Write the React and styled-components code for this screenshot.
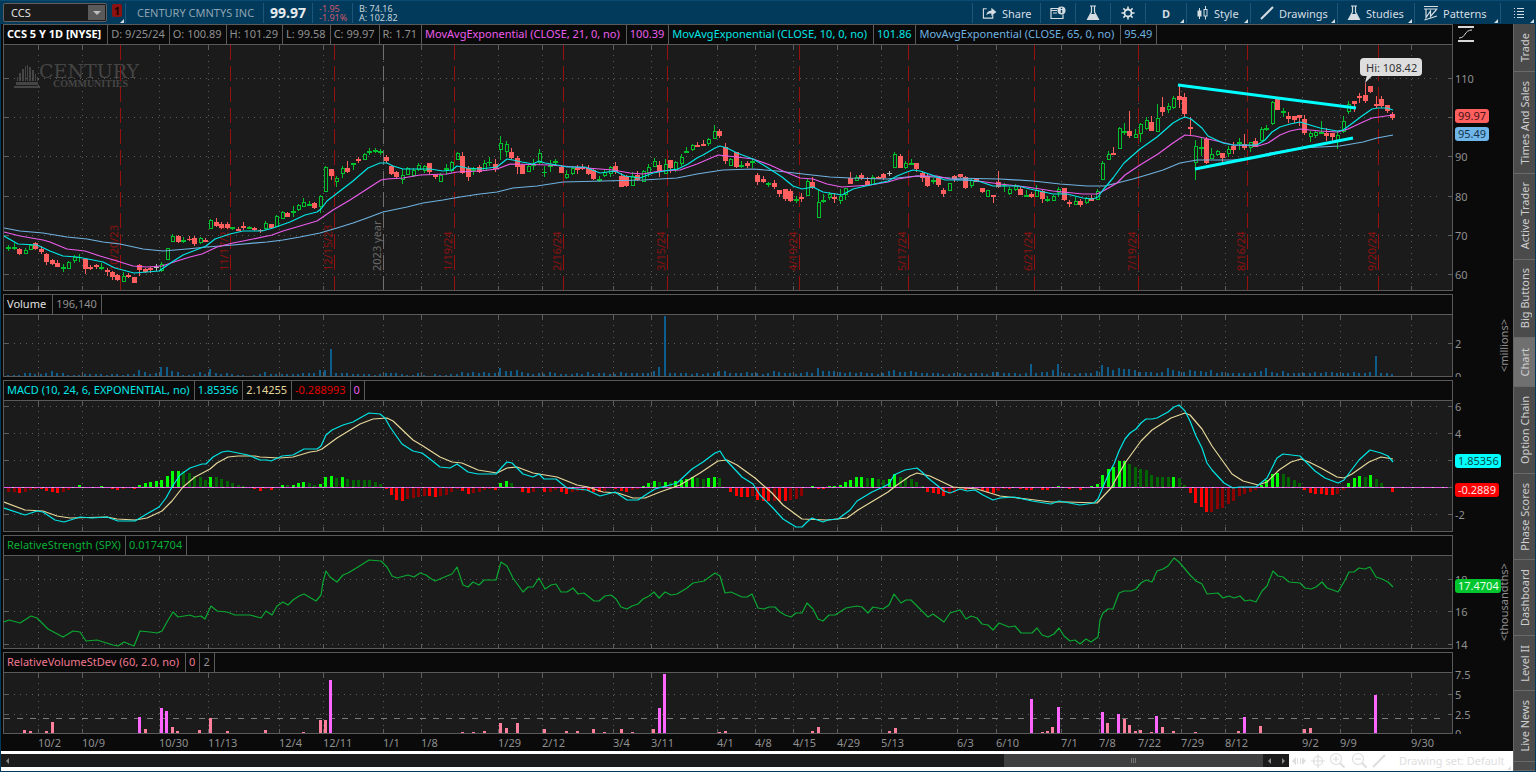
import React from 'react';
import styled, { createGlobalStyle, css } from 'styled-components';

const GlobalStyle = createGlobalStyle`
  * {
    box-sizing: border-box;
  }

  body {
    margin: 0;
    background: #0a0a0a;
    font-family: "Noto Sans", "Open Sans", sans-serif;
    font-size: 11px;
    color: #8f8f8f;
  }

  button,
  input {
    font: inherit;
    color: inherit;
    border: 0;
    padding: 0;
    background: none;
  }
`;

const colors = {
  blue: '#013a5b',
  line: '#5a5a5a',
  dot: '#5c5c5c',
  plot: '#1b1b1b',
  dark: '#0a0a0a',
  green: '#00c02e',
  red: '#ff5f5f',
  cyan: '#00e5e5',
  magenta: '#ea5cea',
  lightBlue: '#6fb2e0',
  yellow: '#e6d79a',
  expiry: '#96100f'
};

/* ---------- data ---------- */

const FIRST_BAR = 8.6;
const BAR_STEP = 5.47;
const barX = i => Math.floor(FIRST_BAR + BAR_STEP * i);

// direction, high, body top, body bottom, low
const candles = `
g 245 247 249 251|g 243 247 249 250|r 248 249 254 255|g 248 250 253 253|g 244 245 249 250|r 242 243 249 250
r 246 249 252 254|r 253 254 262 265|r 259 260 264 265|r 260 263 267 267|g 264 267 269 272|g 261 262 268 269
g 255 257 260 263|g 254 257 258 262|r 259 259 269 274|r 265 267 269 270|r 264 265 267 269|g 263 267 269 270
r 268 270 272 276|r 271 272 277 280|r 274 275 280 281|g 272 276 281 281|r 273 275 277 278|r 277 277 283 283
r 264 265 270 276|r 268 269 272 273|r 267 268 270 273|w 264 267 268 271|g 262 264 270 272|g 248 248 259 259
g 234 236 241 241|r 235 236 242 243|g 237 240 242 243|r 236 239 240 241|r 236 238 244 246|g 237 238 242 244
r 238 240 242 242|g 219 220 228 229|r 218 222 226 227|r 222 224 228 229|r 222 224 228 229|g 227 227 229 230
r 227 229 231 231|r 222 226 228 230|g 226 227 229 229|r 227 228 230 231|r 229 230 231 233|g 221 223 228 230
r 224 224 228 229|g 215 216 226 227|g 211 212 218 219|r 212 213 217 217|g 206 211 213 217|g 204 205 209 211
g 198 202 206 207|g 201 204 206 206|r 202 203 208 209|g 195 196 206 213|g 166 167 191 192|r 169 169 176 180
g 176 178 181 187|g 166 168 173 178|r 161 168 172 173|g 163 163 165 170|r 157 159 161 163|g 153 154 159 160
g 148 151 153 155|g 148 150 152 153|g 149 151 153 155|r 155 157 161 163|r 166 166 174 175|r 171 172 177 178
g 169 175 179 184|g 167 168 174 175|g 168 170 175 177|g 163 165 169 171|g 165 166 170 173|r 163 163 172 174
r 175 175 177 179|g 173 175 181 182|g 164 168 170 175|g 161 162 170 173|g 152 153 159 160|r 152 156 173 174
r 166 168 177 181|g 167 169 171 175|r 165 167 172 173|g 160 163 170 171|g 157 162 163 166|r 159 164 169 172
g 136 143 149 160|g 141 144 151 157|r 148 152 158 159|r 156 158 167 174|r 164 165 174 174|g 165 166 171 172
g 159 164 166 170|g 149 153 162 164|g 166 172 173 177|g 160 165 167 172|g 159 161 163 166|r 165 167 173 173
g 170 174 177 179|g 166 168 173 175|r 165 167 170 174|r 164 167 169 170|r 165 168 174 175|r 169 170 179 180
g 176 179 181 182|g 170 172 175 177|g 166 167 173 177|r 162 166 172 174|r 173 176 187 187|r 175 176 186 187
g 172 176 185 186|r 171 175 180 181|g 170 171 181 182|g 164 167 172 177|g 158 161 166 167|r 161 165 172 177
g 159 164 173 174|r 160 160 168 173|g 161 162 169 172|g 154 157 163 166|g 147 151 153 153|g 144 145 149 151
r 142 145 147 147|r 140 144 146 146|g 138 139 143 146|g 125 131 138 138|r 129 131 136 138|r 143 147 161 164
g 158 159 165 165|r 152 152 167 168|g 161 165 167 168|r 161 163 166 168|g 159 161 163 168|r 173 175 182 185
r 176 179 182 183|g 182 183 185 187|r 180 183 187 189|r 190 190 194 197|r 189 189 199 201|r 189 191 201 202
g 196 199 201 203|r 193 197 199 202|g 178 181 195 195|r 177 182 188 189|g 190 202 217 217|g 194 200 202 203
g 192 194 197 200|r 193 197 199 203|g 189 196 200 204|g 188 188 194 200|r 172 178 184 184|g 175 177 180 181
r 173 175 178 180|r 177 181 185 185|g 175 177 184 185|r 176 177 179 179|r 173 174 178 180|w 171 173 174 176
g 152 154 167 167|r 154 156 168 168|g 161 163 167 169|g 159 163 165 165|r 163 163 169 172|r 171 173 178 182
r 174 176 186 187|g 178 180 182 184|r 177 178 185 187|r 188 190 194 197|g 183 183 190 190|r 175 176 179 182
r 174 174 177 178|r 176 177 188 189|g 179 180 185 188|r 179 179 182 182|r 188 188 192 193|g 190 190 196 197
r 195 195 197 203|r 171 182 187 188|g 183 185 186 192|g 187 189 193 195|g 184 186 189 191|r 187 189 195 195
g 190 195 197 197|r 192 194 197 198|g 185 190 196 196|r 190 191 199 203|g 196 199 201 202|g 195 196 200 201
g 187 189 192 197|r 188 188 200 201|r 200 202 204 207|g 197 201 204 205|r 199 201 205 207|g 197 198 202 204
r 195 198 201 201|g 189 191 199 199|g 161 163 179 180|g 151 154 159 159|r 147 153 155 155|g 127 128 148 148
g 123 131 133 135|r 111 131 136 138|g 129 134 137 138|g 123 124 133 142|g 117 120 128 130|r 116 122 131 131
g 104 118 131 132|r 97 107 112 116|g 103 106 109 113|g 96 98 107 109|r 85 96 100 108|r 93 97 114 117
r 117 127 129 135|g 140 146 162 180|g 138 147 149 156|r 137 139 163 164|g 148 154 158 159|g 150 151 154 156
r 153 153 158 162|g 146 149 153 157|r 142 146 150 154|g 138 142 144 150|r 134 144 148 150|g 142 142 147 152
r 138 141 147 147|g 127 129 140 140|g 125 128 130 131|g 101 102 123 125|r 98 99 110 110|g 108 111 113 117
r 112 116 119 123|r 116 116 120 123|r 115 115 118 126|r 115 119 133 135|g 131 133 136 142|g 130 132 135 138
g 121 132 134 134|r 128 133 136 141|r 133 133 137 142|g 131 135 140 149|g 116 121 131 133|g 101 104 111 114
r 101 101 104 112|r 93 96 98 103|r 83 95 101 103|r 86 86 92 93|r 96 104 106 108|r 96 99 106 108
r 105 105 111 113|r 112 114 118 120`
  .trim()
  .split(/[|\n]/)
  .map(row => {
    const [dir, ...values] = row.split(' ');
    const [high, top, bottom, low] = values.map(Number);
    return { dir, high, top, bottom, low };
  });

const ema10 = `4,236 18,244 37,245 50,251 63,256 77,257 88,259 103,262 115,268 134,273 147,272 159,271 172,262 183,255
206,246 215,239 230,234 243,231 262,231 273,228 290,222 305,215 317,212 321,209 327,201 340,191 353,181 368,168 380,163
387,163 393,166 403,169 430,169 443,171 452,170 457,166 467,168 480,169 497,167 507,159 513,160 522,162 533,164 539,161
545,163 557,165 567,167 585,167 600,173 615,171 625,176 640,178 653,173 670,170 678,169 688,164 697,158 703,155 715,148
720,146 727,148 737,153 753,159 765,166 782,177 793,186 802,189 813,187 823,192 842,195 853,189 870,185 888,181 897,176
907,172 913,170 920,171 932,175 945,180 970,180 978,181 993,186 1018,186 1030,189 1053,194 1067,194 1083,198 1093,199
1098,197 1103,190 1113,178 1124,163 1140,149 1157,137 1173,123 1180,119 1185,117 1191,119 1202,128 1208,136 1223,143
1233,145 1257,145 1265,140 1272,132 1280,127 1290,124 1300,122 1310,125 1320,128 1337,131 1343,130 1350,125 1362,116
1372,109 1378,108 1387,108 1393,110`;

const ema21 = `4,232 20,236 43,240 50,242 67,249 85,251 100,256 117,261 133,266 147,267 162,266 177,261 190,257 202,254
217,247 233,243 253,239 272,235 283,231 300,226 317,221 333,210 350,200 367,189 381,180 387,179 403,178 420,175 447,174
457,172 480,171 497,169 510,164 550,165 587,168 613,170 630,173 643,174 660,171 680,170 697,164 718,155 737,157 753,159
770,165 783,171 800,178 813,179 827,184 842,187 870,185 888,182 898,179 917,176 937,176 950,179 978,181 1000,184
1027,187 1053,191 1083,194 1097,194 1105,190 1117,183 1125,175 1140,165 1158,154 1173,143 1185,135 1195,136 1217,141
1233,145 1258,146 1268,143 1280,135 1290,131 1300,129 1320,131 1338,132 1348,129 1363,122 1372,118 1393,115`;

const ema65 = `4,228 20,231 43,233 67,237 87,239 103,242 120,244 143,249 163,251 187,249 207,247 233,245 267,242 283,240
300,237 320,233 337,228 353,223 367,218 383,212 407,207 423,203 443,200 460,197 480,194 497,192 513,188 537,186 563,182
603,181 643,180 677,178 697,174 723,170 753,169 777,171 803,174 830,177 850,178 887,179 917,176 950,178 1000,179
1033,181 1060,184 1087,186 1105,186 1117,183 1133,179 1150,174 1163,170 1180,163 1197,160 1233,160 1257,157 1270,153
1300,148 1320,147 1340,146 1363,142 1377,138 1393,135`;

const macdLine = `4,508 25,515 37,511 43,512 55,520 64,522 80,517 92,518 107,517 118,521 135,521 145,515 159,507 166,498
172,487 180,475 190,468 202,464 206,464 213,457 222,452 228,451 248,455 260,460 267,460 271,461 282,456 293,455 304,449
317,449 321,446 326,435 332,430 343,425 353,422 360,418 369,413 380,414 385,418 390,427 402,444 413,451 422,453 430,459
440,467 450,468 457,464 468,472 478,474 496,474 502,467 507,462 512,463 523,474 533,477 539,474 544,479 556,479 567,488
587,490 600,496 615,492 627,500 638,500 647,494 655,489 677,483 692,469 703,462 715,453 720,451 725,459 742,477 753,484
760,495 773,508 783,519 796,527 802,527 807,522 812,518 823,522 828,520 838,519 850,510 857,501 872,492 883,487 889,484
894,475 905,470 917,468 922,472 928,478 938,486 944,491 950,493 960,489 967,491 975,490 983,495 993,500 1000,498
1014,497 1032,501 1051,504 1059,501 1080,505 1094,503 1098,499 1103,487 1109,473 1114,464 1119,451 1125,439 1130,433
1136,429 1141,423 1146,419 1152,419 1157,418 1168,412 1174,407 1179,405 1185,411 1190,421 1196,436 1202,448 1207,463
1212,470 1224,483 1233,488 1239,487 1256,487 1267,478 1277,458 1283,454 1300,456 1315,471 1325,478 1338,483 1344,480
1359,460 1370,450 1381,453 1388,456 1393,462`;

const signalLine = `4,502 25,510 43,511 57,516 70,518 107,517 117,519 135,520 147,518 162,511 172,501 183,487 195,477
210,469 217,463 228,457 238,456 255,456 260,457 280,458 293,457 310,452 317,451 322,449 337,438 360,424 373,419 387,418
393,421 413,440 423,446 440,457 452,462 462,463 478,470 497,473 507,468 517,467 533,473 557,477 577,485 588,487 603,492
618,493 633,498 645,498 660,492 680,485 700,473 718,461 727,460 737,465 755,478 772,493 783,505 802,519 827,520 847,518
858,510 888,492 897,485 910,476 917,473 930,476 953,487 977,489 1000,496 1027,499 1051,502 1068,502 1097,503 1111,488
1125,463 1141,441 1152,430 1171,418 1185,413 1190,415 1202,429 1212,446 1232,474 1243,481 1258,485 1267,482 1279,470
1291,462 1301,459 1309,462 1321,468 1337,477 1344,478 1352,474 1369,462 1381,457 1393,459`;

const histogram = [
  -4.3, -4.2, -4.6, -3.6, -1.6, -0.5, -1, -2.6, -3.6, -4.5, -3.6, -1.6, 0, 2.3, 0, 0, 0, 1.3, 0, -0.5, -1.6, -0.5, 0,
  -0.6, 2.3, 4.3, 5.3, 6, 7.3, 11.3, 16.3, 16.3, 15.6, 14.3, 11.3, 9.6, 7.3, 10.3, 10, 8.3, 6.3, 4.3, 2.3, 1.3, 0, -0.5,
  -2.6, -1.3, -1.6, 0, 2.3, 2, 2.3, 4.3, 5.3, 4.3, 2.3, 3.3, 10.3, 11.3, 9.3, 10.3, 8.3, 7.3, 7.2, 7.1, 7, 5.3, 3.3,
  -0.6, -6.6, -11.6, -12.6, -11.3, -10.3, -8.6, -7.6, -7.8, -8.6, -8.3, -6.6, -3.6, -0.5, -2.6, -5.6, -4.6, -4.4, -1.6,
  -0.6, -1.6, 4.3, 6.3, 4.3, 0, -3.6, -4.6, -3.6, -0.3, -3.6, -3.5, -1.5, -3.6, -5.6, -3.5, -3, -2.6, -3, -3.5, -4, -3,
  0, -0.5, -2.6, -3.6, -2.3, -1.3, 1.3, 4.3, 6.3, 5.3, 5.4, 5.3, 5.6, 6.6, 8.3, 9.6, 9.3, 8.3, 9.3, 10.3, 9.3, 0, -3.6,
  -7.6, -8.6, -8.6, -7.6, -11.6, -12.6, -12.8, -12.6, -12.7, -12.8, -12.3, -10.6, -7.6, 0, 1.3, -0.5, -1, 1.3, 1.3, 2.3,
  5.3, 7.3, 10.3, 10.3, 9.3, 9.4, 8.3, 7.3, 8.3, 12.6, 10.3, 9.3, 8.3, 5.3, 1.3, -3.6, -4.6, -5.6, -7.6, -5.6, -4.6, -2,
  -2.2, -1, -0.5, -3, -4, -4.6, -2.6, -0.5, -0.5, 0, -0.6, -1.6, -1.8, 0, -1.6, -1.8, 0, 1.3, 0, -0.6, 0, -1.6, 0, 0.5,
  3.3, 11.5, 18, 20, 26, 26, 23, 20, 18, 17, 11.5, 9.7, 9.6, 9.5, 9.8, 8.6, 2.3, -4.6, -15, -19, -24.3, -24.2, -21, -20,
  -16, -12.6, -7.6, -5.6, -3.6, -2.3, 2, 6.6, 12.6, 13.6, 12.6, 9.6, 6.6, 4.3, -1.6, -4.6, -5.6, -6, -6.6, -6.6, -6.3,
  -1.6, 4.3, 8.6, 10.6, 10.3, 11.6, 7.6, 4.3, 0, -3.6
];

const volume = [
  1, 1, 1, 3, 3, 2, 2, 3, 5, 3, 3, 1, 1, 1, 2, 2, 2, 2, 1, 2, 2, 1, 2, 2, 6, 4, 2, 3, 9, 9, 5, 4, 1, 1, 2, 4, 2, 7, 3, 2,
  3, 2, 1, 1, 0, 1, 2, 4, 2, 2, 2, 2, 2, 2, 3, 3, 3, 6, 6, 27, 3, 3, 3, 2, 2, 2, 2, 1, 2, 3, 3, 3, 2, 1, 1, 3, 1, 0, 2,
  1, 1, 2, 2, 4, 3, 4, 3, 4, 3, 3, 8, 5, 5, 6, 4, 3, 2, 3, 2, 4, 3, 2, 2, 2, 3, 2, 4, 2, 3, 3, 2, 2, 4, 3, 3, 3, 3, 3, 5,
  9, 60, 3, 3, 3, 3, 2, 3, 2, 3, 3, 5, 5, 3, 3, 3, 4, 3, 3, 2, 3, 5, 4, 3, 3, 2, 3, 4, 3, 8, 5, 5, 5, 4, 3, 4, 3, 4, 3,
  3, 2, 3, 5, 6, 4, 4, 5, 4, 3, 3, 3, 3, 2, 2, 3, 3, 2, 3, 3, 3, 2, 4, 4, 3, 3, 3, 2, 3, 12, 3, 4, 4, 6, 12, 3, 3, 2, 3,
  3, 3, 5, 11, 9, 6, 8, 7, 7, 6, 4, 4, 4, 3, 4, 8, 6, 5, 4, 6, 5, 5, 4, 6, 3, 4, 3, 3, 3, 3, 3, 4, 5, 8, 4, 3, 5, 3, 3,
  3, 3, 3, 4, 3, 4, 4, 3, 3, 3, 4, 3, 3, 4, 20, 3, 3, 2
];

const strengthLine = `4,622 9,620 20,623 31,616 37,618 48,629 63,637 73,631 80,632 86,641 97,640 113,645 118,646 124,642
134,646 140,631 150,632 157,633 162,631 167,622 173,612 178,617 190,615 195,617 201,616 205,619 211,606 217,611 227,612
235,615 250,615 261,618 266,611 272,615 277,606 283,602 288,605 293,600 299,596 304,594 316,601 321,595 323,582 326,571
330,577 337,582 343,575 348,573 358,567 369,560 381,561 387,567 392,576 397,578 408,575 414,577 420,573 426,575 430,578
435,581 447,576 452,574 457,567 463,585 468,587 473,582 479,585 484,580 496,580 501,562 507,566 513,578 523,592 528,587
533,587 539,578 545,589 551,585 556,584 561,592 567,592 573,588 578,594 584,593 594,601 599,601 605,596 611,595 616,599
621,607 627,609 632,606 638,604 643,599 649,596 654,592 659,598 665,592 671,595 677,594 687,588 693,583 704,581 715,573
720,576 725,593 731,592 742,597 747,597 752,594 758,608 764,609 769,607 775,607 780,612 785,615 791,617 796,613 802,613
807,603 813,609 818,619 823,621 829,615 835,615 846,608 857,606 862,607 868,613 873,607 883,609 889,605 894,594 901,603
906,600 911,600 922,611 928,617 933,614 944,622 950,613 960,610 966,619 971,616 977,618 982,624 988,625 993,630 999,623
1009,627 1015,626 1021,633 1032,633 1037,628 1042,635 1048,637 1054,634 1059,628 1064,636 1070,641 1075,640 1080,644
1086,639 1091,642 1098,637 1100,620 1103,613 1108,609 1113,609 1119,593 1124,591 1131,591 1136,589 1141,583 1146,580
1152,582 1157,571 1163,569 1168,566 1174,558 1179,562 1185,569 1190,575 1196,581 1202,584 1207,594 1218,593 1223,598
1229,596 1234,598 1240,596 1245,601 1250,600 1256,602 1262,591 1267,586 1273,571 1278,576 1283,577 1289,582 1300,583
1305,588 1311,589 1316,587 1322,582 1327,588 1333,590 1338,592 1344,582 1349,572 1354,572 1359,568 1365,569 1370,567
1376,577 1382,579 1388,582 1393,587`;

// x, height
const relVolume = [
  [24, 3], [30, 2], [46, 2], [52, 11], [139, 16], [145, 4], [161, 25], [166, 22], [172, 6], [177, 2], [199, 3],
  [210, 15], [227, 2], [265, 3], [303, 1], [320, 13], [325, 13], [330, 53], [462, 1], [473, 1], [484, 2], [500, 10],
  [506, 5], [517, 10], [544, 4], [566, 2], [577, 2], [593, 4], [604, 1], [621, 4], [632, 1], [653, 4], [659, 25],
  [664, 59], [719, 1], [725, 2], [812, 2], [818, 6], [889, 2], [895, 5], [1031, 34], [1042, 1], [1047, 2], [1052, 6],
  [1058, 26], [1102, 21], [1107, 10], [1118, 19], [1124, 14], [1129, 8], [1135, 2], [1140, 3], [1151, 1], [1156, 17],
  [1162, 6], [1173, 2], [1195, 1], [1238, 2], [1244, 16], [1260, 7], [1304, 4], [1310, 5], [1375, 38]
];

const dates = [
  ['10/2', 38], ['10/9', 82], ['10/30', 159], ['11/13', 208], ['12/4', 279], ['12/11', 323], ['1/1', 383],
  ['1/8', 421], ['1/29', 498], ['2/12', 542], ['3/4', 613], ['3/11', 651], ['4/1', 717], ['4/8', 755], ['4/15', 793],
  ['4/29', 837], ['5/13', 881], ['6/3', 957], ['6/10', 996], ['7/1', 1061], ['7/8', 1099], ['7/22', 1138],
  ['7/29', 1181], ['8/12', 1225], ['9/2', 1302], ['9/9', 1340], ['9/30', 1411]
];

const expirations = [
  ['10/20/23', 120], ['11/17/23', 230], ['12/15/23', 334], ['1/19/24', 454], ['2/16/24', 563], ['3/15/24', 667],
  ['4/19/24', 799], ['5/17/24', 908], ['6/21/24', 1034], ['7/19/24', 1138], ['8/16/24', 1247], ['9/20/24', 1378]
];

/* ---------- layout ---------- */

const Page = styled.div`
  display: flex;
  flex-direction: column;
  height: 100vh;
  min-height: 600px;
  border-bottom: 1px solid ${colors.blue};
  background: ${colors.dark};
`;

const Toolbar = styled.header`
  display: flex;
  flex: 0 0 24px;
  padding: 2px 0 1px 3px;
  background: ${colors.blue};
  border-top: 1px solid #0a4a70;
  color: #d5dde2;
`;

const SymbolBox = styled.div`
  display: flex;
  width: 104px;
  height: 19px;
  padding: 1px;
  background: #1b1b1b;
  border: 1px solid #5f5f5f;
  border-radius: 2px;
`;

const SymbolInput = styled.input`
  flex: 1;
  min-width: 0;
  padding-left: 6px;
  color: #e0e0e0;
  outline: none;
`;

const SymbolArrow = styled.button`
  display: flex;
  align-items: center;
  justify-content: center;
  width: 17px;
  background: #5a5a5a;
`;

const cornerMark = css`
  &::after {
    content: "";
    position: absolute;
    right: 2px;
    bottom: 0;
    border-left: 4px solid transparent;
    border-bottom: 4px solid currentColor;
  }
`;

const LinkBadge = styled.button`
  position: relative;
  width: 18px;
  padding: 0 3px 4px 5px;
  ${cornerMark}
  &::after {
    right: 1px;
  }

  span {
    display: block;
    height: 13px;
    margin-bottom: 2px;
    border-radius: 2px;
    background: #8e1212;
    color: #1a0606;
    font-weight: 700;
    line-height: 13px;
    text-align: center;
  }
`;

const QuoteCell = styled.div`
  display: flex;
  flex-direction: column;
  justify-content: center;
  width: ${p => p.$width}px;
  padding-left: ${p => p.$pad || 6}px;
  border-left: 1px solid #1e557a;
  font-size: ${p => p.$size || 9}px;
  font-weight: ${p => (p.$bold ? 700 : 400)};
  line-height: ${p => (p.$size ? 18 : 9)}px;
  color: ${p => p.$color || '#c9d3d9'};
  white-space: nowrap;

  &:last-of-type {
    border-right: 1px solid #1e557a;
  }
`;

const Spacer = styled.div`
  flex: 1;
`;

const ToolButton = styled.button`
  position: relative;
  display: flex;
  align-items: center;
  justify-content: ${p => (p.$center ? 'center' : 'flex-start')};
  gap: 5px;
  width: ${p => p.$width}px;
  padding-left: ${p => (p.$center ? 0 : 9)}px;
  border-left: 1px solid #1e557a;
  font-size: 11px;
  white-space: nowrap;
  ${p => p.$menu && cornerMark}
`;

const Body = styled.div`
  display: flex;
  flex: 1;
  min-height: 0;
  border-left: 1px solid ${colors.blue};
  border-right: 1px solid ${colors.blue};
`;

const Main = styled.main`
  display: flex;
  flex: 1;
  flex-direction: column;
  min-width: 0;
`;

const Panels = styled.div`
  display: flex;
  flex: 1;
  flex-direction: column;
  gap: 3px;
  min-height: 0;
  padding-left: 2px;
`;

// header and borders take 22px, the remaining height is shared by the plots
const PanelRow = styled.section`
  display: grid;
  flex: ${p => p.$grow} 1 22px;
  grid-template-columns: minmax(0, 1fr) 60px;
  grid-template-rows: minmax(0, 1fr);
  min-height: 0;
`;

const PanelFrame = styled.div`
  display: flex;
  flex-direction: column;
  min-height: 0;
  border: 1px solid ${colors.line};
`;

const PanelHeader = styled.div`
  display: flex;
  flex: 0 0 20px;
  overflow: hidden;
  border-bottom: 1px solid ${colors.line};
  background: ${colors.dark};
`;

const HeaderCell = styled.span`
  padding: 0 ${p => (p.$wide ? 6 : 4)}px 0 3px;
  border-right: 1px solid ${colors.line};
  color: ${p => p.$color || '#8f8f8f'};
  font-weight: ${p => (p.$bold ? 700 : 400)};
  line-height: 18px;
  white-space: nowrap;
`;

const Plot = styled.svg`
  display: block;
  flex: 1 1 0;
  width: 100%;
  height: 0;
  min-height: 0;
  background: ${colors.plot};
`;

const AxisSvg = styled.svg`
  display: block;
  width: 100%;
  height: 100%;
  font-size: 11px;
  fill: #8f8f8f;
`;

const DateAxis = styled.svg`
  display: block;
  flex: 0 0 17px;
  width: 100%;
  height: 17px;
  fill: #8f8f8f;
`;

const BottomBar = styled.footer`
  display: flex;
  align-items: center;
  flex: 0 0 20px;
  padding-bottom: 1px;
  background: #fff;
  color: #dedede;
`;

const ScrollTrack = styled.div`
  display: flex;
  flex: 1;
  height: 13px;
  background: #1b1b1b;
`;

const ScrollArrow = styled.button`
  display: flex;
  align-items: center;
  justify-content: center;
  width: 13px;
`;

const ScrollGap = styled.div`
  flex: 990 1 0;
`;

const ScrollThumb = styled.div`
  display: flex;
  flex: 259 1 0;
  align-items: center;
  justify-content: center;
  background: #404040;
`;

const DrawingTools = styled.div`
  display: flex;
  align-items: center;
  justify-content: space-between;
  width: 97px;
  height: 18px;
  padding-left: 3px;
`;

const DrawingTool = styled.button`
  display: flex;
  color: #dedede;
`;

const DrawingSet = styled.button`
  position: relative;
  width: 127px;
  height: 18px;
  padding-left: 13px;
  line-height: 18px;
  text-align: left;
  white-space: nowrap;
  ${cornerMark}
`;

const SideTabs = styled.nav`
  display: flex;
  flex: 0 0 22px;
  flex-direction: column;
  background: #4b4b4b;
  border-left: 1px solid #666;
`;

const SideTab = styled.button`
  display: flex;
  flex: ${p => p.$size} 1 0;
  align-items: center;
  justify-content: center;
  min-height: 0;
  overflow: hidden;
  border-bottom: 1px solid #6a6a6a;
  background: ${p => (p.$active ? '#707070' : '#4b4b4b')};
  color: #cfcfcf;

  span {
    writing-mode: vertical-rl;
    transform: rotate(180deg);
    line-height: 20px;
    white-space: nowrap;
  }
`;

/* ---------- icons ---------- */

const ShareIcon = () => (
  <svg width="15" height="14" viewBox="0 0 16 14" fill="none" stroke="#d5dde2" strokeWidth="1.2">
    <path d="M5 2.5H1.500v10h10V9" />
    <path d="M4.500 9.500C5 6 7 4.500 10 4.300V1.500L15.300 6 10 10.200V7.500C7.500 7.400 5.800 8 4.500 9.500Z" fill="#d5dde2" stroke="none" />
  </svg>
);

const NewsIcon = () => (
  <svg width="16" height="14" viewBox="0 0 16 14">
    <path d="M8 2.500H1v10h12V8.500" fill="none" stroke="#d5dde2" strokeWidth="1.200" />
    <path d="M1 4.500h6M3 7h4" stroke="#d5dde2" />
    <circle cx="11.500" cy="4.500" r="4" fill="#d5dde2" />
    <path d="M11.500 1.800v1.300M11.500 4v3" stroke={colors.blue} strokeWidth="1.400" />
  </svg>
);

const FlaskIcon = () => (
  <svg width="14" height="16" viewBox="0 0 14 16">
    <path d="M4 1h6M5.500 1v6L1.500 14.500h11L8.500 7V1" fill="none" stroke="#d5dde2" strokeWidth="1.200" />
    <path d="M4.500 9h5l3 5.500h-11z" fill="#d5dde2" />
  </svg>
);

const GearIcon = () => (
  <svg width="14" height="14" viewBox="0 0 14 14" fill="none" stroke="#e2e6e8">
    <circle cx="7" cy="7" r="3.500" strokeWidth="1.800" />
    <path d="M7 .5v2.500M7 11v2.500M.5 7H3M11 7h2.500M2.400 2.400l1.800 1.800M9.800 9.800l1.800 1.800M2.400 11.600l1.800-1.800M9.800 4.200l1.800-1.800" strokeWidth="1.500" />
  </svg>
);

const CandlesIcon = () => (
  <svg width="13" height="14" viewBox="0 0 12 14" stroke="#d5dde2">
    <path d="M3 2v11M9 0v3M9 10v3.500" />
    <rect x="1" y="4.500" width="4" height="6" fill="#d5dde2" stroke="none" />
    <rect x="7.500" y="3.500" width="3" height="6.500" fill="none" />
  </svg>
);

const LineIcon = ({ color = '#d5dde2' }) => (
  <svg width="14" height="14" viewBox="0 0 14 14">
    <path d="M1 13 13 1" stroke={color} strokeWidth="2" />
  </svg>
);

const PatternsIcon = () => (
  <svg width="14" height="16" viewBox="0 0 14 16" fill="none" stroke="#d5dde2" strokeWidth="1.200">
    <path d="M0 1.500h14M0 4h13.500M.5 15 13 11M2 4v8.500L6.500 6v5.500L12.500 4.500" />
  </svg>
);

const MenuIcon = () => (
  <svg width="12" height="12" viewBox="0 0 12 12" fill="#d5dde2">
    {[0, 3, 6, 9].map(y => (
      <path key={y} d={`M1 ${y + 1}h1v1h-1zM4 ${y + 1}h7v1h-7z`} />
    ))}
  </svg>
);

const Triangle = ({ points, color }) => (
  <svg width="8" height="8" viewBox="0 0 8 8">
    <polygon points={points} fill={color} />
  </svg>
);

const PanIcon = () => (
  <svg width="14" height="12" viewBox="0 0 14 12" fill="#dedede">
    <path d="M0 6l4-4v8zM14 6l-4-4v8zM5 3h1v6H5zM8 3h1v6H8z" />
  </svg>
);

const CrosshairIcon = () => (
  <svg width="14" height="14" viewBox="0 0 14 14" fill="none" stroke="#dedede" strokeWidth="1.200">
    <circle cx="7" cy="7" r="4.500" />
    <path d="M7 0v14M0 7h14" />
  </svg>
);

const ZoomIcon = ({ plus }) => (
  <svg width="17" height="17" viewBox="0 0 17 17" fill="none" stroke="#dedede" strokeWidth="1.200">
    <circle cx="7" cy="7" r="5.500" />
    <path d={plus ? 'M4 7h6M7 4v6' : 'M4 7h6'} />
    <path d="M11 11l4.500 4.500" strokeWidth="2" />
  </svg>
);

/* ---------- chart parts ---------- */

const Grid = ({ top, height, rows }) => (
  <g stroke={colors.dot} shapeRendering="crispEdges">
    {dates.map(([label, x]) => (
      <g key={label}>
        <path d={`M${x + 0.5} ${top}v5M${x + 0.5} ${top + height - 4}v4`} />
        <path d={`M${x + 0.5} ${top + 10}V${top + height - 5}`} strokeDasharray="1 5" />
      </g>
    ))}
    {rows.map(y => (
      <g key={y}>
        <path d={`M4 ${y + 0.5}h5M1448 ${y + 0.5}h4`} />
        <path d={`M14 ${y + 0.5}H1442`} strokeDasharray="1 5" />
      </g>
    ))}
  </g>
);

const Candle = ({ index, candle }) => {
  const { dir, high, top, bottom, low } = candle;
  const x = barX(index);
  const height = Math.max(bottom - top, 1);

  if (dir === 'w') {
    return <path d={`M${x + 0.5} ${high}V${low}M${x - 2} ${top + 0.5}h5`} stroke="#bdbdbd" />;
  }

  if (dir === 'r' || height < 3) {
    const color = dir === 'r' ? colors.red : colors.green;
    return (
      <g fill={color}>
        <rect x={x} y={high} width="1" height={low - high} />
        <rect x={x - 2} y={top} width="5" height={height} />
      </g>
    );
  }

  return (
    <g stroke={colors.green} fill="none">
      <path d={`M${x + 0.5} ${high}V${top}M${x + 0.5} ${bottom}V${low}`} />
      <rect x={x - 0.5} y={top + 0.5} width="3" height={height} />
    </g>
  );
};

const Curve = ({ points, color }) => (
  <polyline points={points} fill="none" stroke={color} strokeWidth="1.200" strokeLinejoin="round" />
);

const Logo = () => (
  <g fill="#454545">
    <path d="M14 86h26v2H14zM16 82h22v3H16zM17 77h1v4h-1zM19 73h2v8h-2zM22 69h2v12h-2zM25 66h1v15h-1zM27 65h1v16h-1zM29 67h2v14h-2zM32 70h2v11h-2zM35 74h1v7h-1zM37 77h1v4h-1z" />
    <text x="39" y="78" fontFamily="DejaVu Serif, serif" fontSize="19">CENTURY</text>
    <text x="53" y="87" fontFamily="Liberation Serif, serif" fontSize="10" fontWeight="700">COMMUNITIES</text>
  </g>
);

const PricePlot = () => (
  <>
    <Logo />
    <Grid top={45} height={245} rows={[78, 117, 156, 196, 235, 274]} />
    <path d="M383.500 45V290" stroke="#707070" strokeDasharray="15 6" shapeRendering="crispEdges" />
    <text transform="translate(381 271) rotate(-90)" fontSize="11" fill="#696969">2023 year</text>
    {expirations.map(([label, x]) => (
      <g key={label}>
        <path d={`M${x + 0.5} 45V290`} stroke={colors.expiry} strokeDasharray="15 6" shapeRendering="crispEdges" />
        <text transform={`translate(${x - 2} 271) rotate(-90)`} fontSize="11" fill="#8a1211">{label}</text>
      </g>
    ))}
    <g shapeRendering="crispEdges">
      {candles.map((candle, i) => <Candle key={i} index={i} candle={candle} />)}
    </g>
    <Curve points={ema65} color={colors.lightBlue} />
    <Curve points={ema21} color={colors.magenta} />
    <Curve points={ema10} color={colors.cyan} />
    <path d="M1178 85 1356 108M1195 169 1353 138" stroke="#00ffff" strokeWidth="3" />
    <path d="M1367 75 1365 83 1373 75z" fill="#dedede" />
    <rect x="1360" y="58" width="62" height="18" rx="4" fill="#dedede" />
    <text x="1366" y="72" fontSize="11" fill="#333">Hi: 108.42</text>
  </>
);

const VolumePlot = () => (
  <>
    <Grid top={315} height={61} rows={[343]} />
    <g fill="#0d5e8c" shapeRendering="crispEdges">
      {volume.map((h, i) => <rect key={i} x={barX(i) - 1} y={376 - h} width="2" height={h} />)}
    </g>
  </>
);

const histogramColor = (value, previous) => {
  if (value >= 0) {
    return value >= previous ? '#00ff00' : '#006400';
  }
  return value <= previous ? '#ff0000' : '#8b0000';
};

const MacdPlot = () => (
  <>
    <Grid top={401} height={130} rows={[406, 433, 460, 487, 514]} />
    <g shapeRendering="crispEdges">
      {histogram.map((value, i) => {
        const height = Math.round(Math.abs(value));
        return (
          <rect
            key={i}
            x={barX(i) - 1}
            y={value >= 0 ? 487 - height : 488}
            width="3"
            height={height}
            fill={histogramColor(value, i ? histogram[i - 1] : -5)}
          />
        );
      })}
      <path d="M4 487.500H1448" stroke="#c8c8c8" />
      <path d="M4 487.500H1448" stroke="#e65ce6" strokeDasharray="8 2" />
    </g>
    <Curve points={signalLine} color={colors.yellow} />
    <Curve points={macdLine} color={colors.cyan} />
  </>
);

const StrengthPlot = () => (
  <>
    <Grid top={556} height={92} rows={[579, 611, 644]} />
    <Curve points={strengthLine} color="#0aa832" />
  </>
);

const RelVolumePlot = () => (
  <>
    <Grid top={673} height={60} rows={[694, 714]} />
    <path d="M4 718.500H1442" stroke="#7a7a7a" strokeDasharray="6 7" shapeRendering="crispEdges" />
    <g shapeRendering="crispEdges">
      {relVolume.map(([x, h]) => (
        <rect key={x} x={x - 1} y={733 - h} width="3" height={h} fill={h > 15 ? '#ff66ff' : '#ff7f9c'} />
      ))}
    </g>
  </>
);

const AxisLabels = ({ labels }) => labels.map(([label, y]) => (
  <text key={label} x="1455" y={y + 4}>{label}</text>
));

const AxisTag = ({ y, width, color, textColor, children }) => (
  <g>
    <rect x="1455" y={y} width={width} height="14" rx="3" fill={color} />
    <text x="1458" y={y + 11} fill={textColor}>{children}</text>
  </g>
);

const AxisUnit = ({ y, children }) => (
  <text transform={`translate(1508 ${y}) rotate(-90)`}>{children}</text>
);

const Panel = ({ top, height, header, plot, axis }) => (
  <PanelRow $grow={height}>
    <PanelFrame>
      <PanelHeader>
        {header.map(({ text, color, bold, wide }, i) => (
          <HeaderCell key={i} $color={color} $bold={bold} $wide={wide}>{text}</HeaderCell>
        ))}
      </PanelHeader>
      <Plot viewBox={`4 ${top + 21} 1448 ${height}`} preserveAspectRatio="none">{plot}</Plot>
    </PanelFrame>
    <AxisSvg viewBox={`1453 ${top} 60 ${height + 22}`} preserveAspectRatio="none">{axis}</AxisSvg>
  </PanelRow>
);

const tools = [
  { label: 'Share', icon: <ShareIcon />, width: 68 },
  { name: 'News', icon: <NewsIcon />, width: 35, center: true },
  { name: 'Studies quick list', icon: <FlaskIcon />, width: 35, center: true },
  { name: 'Settings', icon: <GearIcon />, width: 35, center: true },
  { label: <b>D</b>, width: 41, center: true, menu: true },
  { label: 'Style', icon: <CandlesIcon />, width: 64, menu: true },
  { label: 'Drawings', icon: <LineIcon />, width: 87, menu: true },
  { label: 'Studies', icon: <FlaskIcon />, width: 77, menu: true },
  { label: 'Patterns', icon: <PatternsIcon />, width: 86, menu: true },
  { name: 'Menu', icon: <MenuIcon />, width: 36, center: true, menu: true }
];

const tabs = [
  ['Trade', 48], ['Times And Sales', 102], ['Active Trader', 86], ['Big Buttons', 79], ['Chart', 48],
  ['Option Chain', 88], ['Phase Scores', 86], ['Dashboard', 76], ['Level II', 55], ['Live News', 71]
];

const App = () => (
  <>
    <GlobalStyle />
    <Page>
      <Toolbar>
        <SymbolBox>
          <SymbolInput aria-label="Symbol" defaultValue="CCS" />
          <SymbolArrow aria-label="Recent symbols">
            <Triangle points="0,2 8,2 4,6" color="#bdbdbd" />
          </SymbolArrow>
        </SymbolBox>
        <LinkBadge><span>1</span></LinkBadge>
        <QuoteCell $width={138} $pad={11} $size={11} $color="#8fa3b0">CENTURY CMNTYS INC</QuoteCell>
        <QuoteCell $width={49} $size={14} $bold $color="#e6ebee">99.97</QuoteCell>
        <QuoteCell $width={40} $color="#d0586a">
          <span>-1.95</span>
          <span>-1.91%</span>
        </QuoteCell>
        <QuoteCell $width={51}>
          <span>B: 74.16</span>
          <span>A: 102.82</span>
        </QuoteCell>
        <Spacer />
        {tools.map(({ label, name, icon, width, center, menu }, i) => (
          <ToolButton key={i} aria-label={name} $width={width} $center={center} $menu={menu}>
            {icon}
            {label}
          </ToolButton>
        ))}
      </Toolbar>

      <Body>
        <Main>
          <Panels>
            <Panel
              top={24}
              height={245}
              header={[
                { text: 'CCS 5 Y 1D [NYSE]', color: '#ffffff', bold: true, wide: true },
                { text: 'D: 9/25/24' },
                { text: 'O: 100.89' },
                { text: 'H: 101.29' },
                { text: 'L: 99.58' },
                { text: 'C: 99.97' },
                { text: 'R: 1.71' },
                { text: 'MovAvgExponential (CLOSE, 21, 0, no)', color: colors.magenta, wide: true },
                { text: '100.39', color: colors.magenta },
                { text: 'MovAvgExponential (CLOSE, 10, 0, no)', color: colors.cyan, wide: true },
                { text: '101.86', color: colors.cyan },
                { text: 'MovAvgExponential (CLOSE, 65, 0, no)', color: colors.lightBlue, wide: true },
                { text: '95.49', color: colors.lightBlue }
              ]}
              plot={<PricePlot />}
              axis={
                <>
                  <path d="M1458 27h16M1458 41h16" stroke="#d8d8d8" strokeWidth="2" />
                  <path d="M1459 38c7 0 5-8 13-8" fill="none" stroke="#d8d8d8" />
                  <AxisLabels labels={[['110', 79], ['90', 157], ['80', 197], ['70', 236], ['60', 275]]} />
                  <AxisTag y={109} width={34} color={colors.red} textColor="#4a1515">99.97</AxisTag>
                  <AxisTag y={127} width={34} color="#6fb6ea" textColor="#17344a">95.49</AxisTag>
                </>
              }
            />
            <Panel
              top={294}
              height={61}
              header={[{ text: 'Volume', color: '#e0e0e0', wide: true }, { text: '196,140' }]}
              plot={<VolumePlot />}
              axis={
                <>
                  <AxisLabels labels={[['2', 344], ['0', 377]]} />
                  <AxisUnit y={372}>&lt;millions&gt;</AxisUnit>
                </>
              }
            />
            <Panel
              top={380}
              height={130}
              header={[
                { text: 'MACD (10, 24, 6, EXPONENTIAL, no)', color: colors.cyan },
                { text: '1.85356', color: colors.cyan },
                { text: '2.14255', color: colors.yellow },
                { text: '-0.288993', color: '#e00000' },
                { text: '0', color: colors.magenta }
              ]}
              plot={<MacdPlot />}
              axis={
                <>
                  <AxisLabels labels={[['6', 407], ['4', 434], ['-2', 515]]} />
                  <AxisTag y={454} width={46} color="#00ffff" textColor="#064a4a">1.85356</AxisTag>
                  <AxisTag y={483} width={44} color="#ff0000" textColor="#ffe0e0">-0.2889</AxisTag>
                </>
              }
            />
            <Panel
              top={535}
              height={92}
              header={[
                { text: 'RelativeStrength (SPX)', color: '#0aae36' },
                { text: '0.0174704', color: '#0aae36' }
              ]}
              plot={<StrengthPlot />}
              axis={
                <>
                  <AxisLabels labels={[['18', 580], ['16', 612], ['14', 645]]} />
                  <AxisUnit y={641}>&lt;thousandths&gt;</AxisUnit>
                  <AxisTag y={579} width={46} color="#00c52f" textColor="#e6ffe6">17.4704</AxisTag>
                </>
              }
            />
            <Panel
              top={652}
              height={60}
              header={[
                { text: 'RelativeVolumeStDev (60, 2.0, no)', color: '#f07890', wide: true },
                { text: '0', color: '#f07890' },
                { text: '2' }
              ]}
              plot={<RelVolumePlot />}
              axis={<AxisLabels labels={[['7.5', 675], ['5', 695], ['2.5', 715], ['0', 734]]} />}
            />
          </Panels>
          <DateAxis viewBox="1 734 1512 17" preserveAspectRatio="none">
            {dates.map(([label, x]) => <text key={label} x={x} y="747">{label}</text>)}
          </DateAxis>
          <BottomBar>
            <ScrollTrack>
              <ScrollArrow aria-label="Scroll left"><Triangle points="5,1 5,7 2,4" color="#8a8a8a" /></ScrollArrow>
              <ScrollGap />
              <ScrollThumb>
                <svg width="6" height="5"><path d="M.5 0v5M2.500 0v5M4.500 0v5" stroke="#777" /></svg>
              </ScrollThumb>
              <ScrollArrow aria-label="Back"><Triangle points="5,1 5,7 2,4" color="#8a8a8a" /></ScrollArrow>
              <ScrollArrow aria-label="Forward"><Triangle points="3,1 3,7 6,4" color="#8a8a8a" /></ScrollArrow>
            </ScrollTrack>
            <DrawingTools>
              <DrawingTool aria-label="Pan"><PanIcon /></DrawingTool>
              <DrawingTool aria-label="Crosshair"><CrosshairIcon /></DrawingTool>
              <DrawingTool aria-label="Zoom in"><ZoomIcon plus /></DrawingTool>
              <DrawingTool aria-label="Zoom out"><ZoomIcon /></DrawingTool>
              <DrawingTool aria-label="Draw line"><LineIcon color="#dedede" /></DrawingTool>
            </DrawingTools>
            <DrawingSet>Drawing set: Default</DrawingSet>
          </BottomBar>
        </Main>
        <SideTabs>
          {tabs.map(([label, size]) => (
            <SideTab key={label} $size={size} $active={label === 'Chart'}><span>{label}</span></SideTab>
          ))}
          <SideTab as="div" $size={8} />
        </SideTabs>
      </Body>
    </Page>
  </>
);

export default App;
